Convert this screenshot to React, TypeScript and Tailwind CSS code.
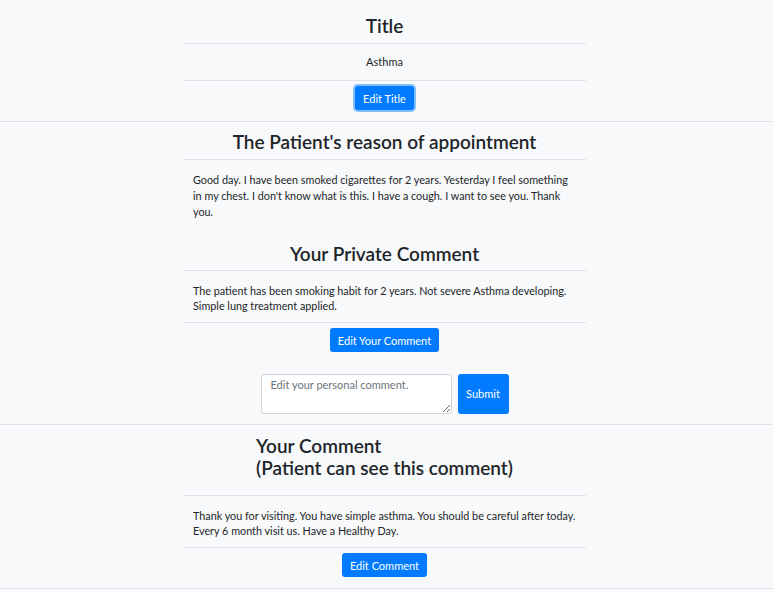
const font = { fontFamily: 'Lato, "Noto Sans", sans-serif' };

const Rule = () => <div className="h-px bg-[#dee2e6]" />;

const Btn = ({ label, ring = false }: { label: string; ring?: boolean }) => (
  <button
    className={
      "h-[24px] px-[8px] rounded-[3px] bg-[#007bff] text-white text-[11px] leading-none" +
      (ring ? " ring-2 ring-[#80bdff]" : "")
    }
  >
    {label}
  </button>
);

const App = () => {
  return (
    <div className="min-h-screen bg-[#f8f9fa] text-[#212529]" style={font}>
      {/* title */}
      <section className="border-b border-[#dee2e6] pr-[4px]">
        <div className="w-[403px] mx-auto">
          <h2 className="h-[43px] pt-[14px] text-center text-[19px] leading-[24px] font-semibold">Title</h2>
          <Rule />
          <p className="h-[36px] flex items-center justify-center text-[11px]">Asthma</p>
          <Rule />
          <div className="flex justify-center pt-[5px] pb-[11px]">
            <Btn label="Edit Title" ring />
          </div>
        </div>
      </section>

      {/* reason + private comment */}
      <section className="border-b border-[#dee2e6] pr-[4px]">
        <div className="w-[403px] mx-auto">
          <h2 className="h-[37px] pt-[8px] text-center text-[19px] leading-[24px] font-semibold">
            The Patient's reason of appointment
          </h2>
          <Rule />
          <p className="px-[10px] pt-[12px] text-[10.8px] leading-[16px]">
            Good day. I have been smoked cigarettes for 2 years. Yesterday I feel something in my chest. I don't know
            what is this. I have a cough. I want to see you. Thank you.
          </p>
          <h2 className="h-[50px] pt-[22px] text-center text-[19px] leading-[24px] font-semibold">Your Private Comment</h2>
          <Rule />
          <p className="px-[10px] pt-[12px] pb-[9px] text-[10.8px] leading-[15px]">
            The patient has been smoking habit for 2 years. Not severe Asthma developing. Simple lung treatment applied.
          </p>
          <Rule />
          <div className="flex justify-center pt-[5px]">
            <Btn label="Edit Your Comment" />
          </div>
          <div className="flex justify-center gap-[6px] pt-[22px] pb-[10px]">
            <textarea
              placeholder="Edit your personal comment."
              className="w-[191px] h-[40px] px-[9px] py-[2px] text-[11px] leading-[16px] bg-white border border-[#ced4da] rounded-[3px] placeholder:text-[#6c757d]"
            />
            <button className="w-[51px] h-[40px] rounded-[3px] bg-[#007bff] text-white text-[11px]">Submit</button>
          </div>
        </div>
      </section>

      {/* public comment */}
      <section className="border-b border-[#dee2e6] pr-[4px]">
        <div className="w-[403px] mx-auto">
          <div className="h-[70px] pt-[10px] flex justify-center">
            <h2 className="text-left text-[19px] leading-[22px] font-semibold">
              Your Comment
              <br />
              (Patient can see this comment)
            </h2>
          </div>
          <Rule />
          <p className="px-[10px] pt-[12px] pb-[9px] text-[10.8px] leading-[15px]">
            Thank you for visiting. You have simple asthma. You should be careful after today. Every 6 month visit us.
            Have a Healthy Day.
          </p>
          <Rule />
          <div className="flex justify-center pt-[5px] pb-[11px]">
            <Btn label="Edit Comment" />
          </div>
        </div>
      </section>
    </div>
  );
};

export default App;
